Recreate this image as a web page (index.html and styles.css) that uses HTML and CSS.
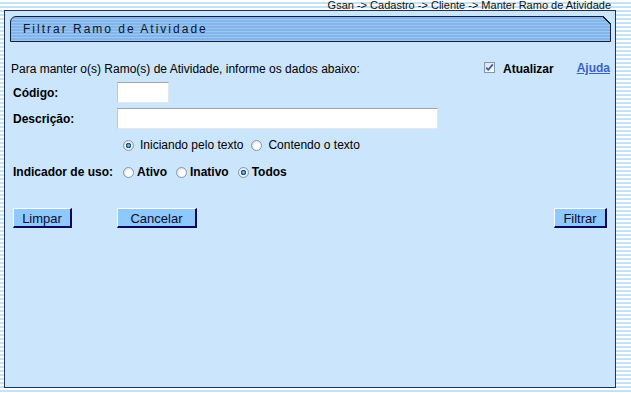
FILE: index.html
```html
<!DOCTYPE html>
<html lang="pt">
<head>
<meta charset="utf-8">
<title>Filtrar Ramo de Atividade</title>
<link rel="stylesheet" href="styles.css">
</head>
<body>
<div class="crumb">Gsan -&gt; Cadastro -&gt; Cliente -&gt; Manter Ramo de Atividade</div>
<div class="panel">
  <div class="titlebar">Filtrar Ramo de Atividade</div>
  <form class="content">
    <div class="intro-row">
      <span class="intro">Para manter o(s) Ramo(s) de Atividade, informe os dados abaixo:</span>
      <label class="atualizar">
        <span class="chk"><svg width="9" height="9" viewBox="0 0 9 9"><path d="M1.2 4.6 L3.3 6.8 L7.8 1.4" fill="none" stroke="#3a55a8" stroke-width="1.7"/></svg></span>
        Atualizar
      </label>
      <a class="ajuda" href="#">Ajuda</a>
    </div>
    <div class="field-row">
      <span class="lbl">Código:</span>
      <input class="txt w-code" type="text">
    </div>
    <div class="field-row row-desc">
      <span class="lbl">Descrição:</span>
      <input class="txt w-desc" type="text">
    </div>
    <div class="radio-row">
      <input class="radio" type="radio" name="tipo" checked><span class="opt">Iniciando pelo texto</span>
      <input class="radio" type="radio" name="tipo"><span class="opt">Contendo o texto</span>
    </div>
    <div class="uso-row">
      <span class="lbl lbl-uso">Indicador de uso:</span>
      <input class="radio" type="radio" name="uso"><span class="opt-b">Ativo</span>
      <input class="radio" type="radio" name="uso"><span class="opt-b">Inativo</span>
      <input class="radio" type="radio" name="uso" checked><span class="opt-b">Todos</span>
    </div>
    <div class="btn-row">
      <button type="button" class="btn b-limpar">Limpar</button>
      <button type="button" class="btn b-cancelar">Cancelar</button>
      <button type="button" class="btn b-filtrar">Filtrar</button>
    </div>
  </form>
</div>
</body>
</html>
```
FILE: styles.css
```css
html, body {
  margin: 0;
  padding: 0;
}
body {
  width: 631px;
  height: 393px;
  overflow: hidden;
  font-family: "Liberation Sans", Arial, sans-serif;
  color: #000;
  background: repeating-linear-gradient(to bottom, #ffffff 0 2px, #c4e2f6 2px 4px);
}
.crumb {
  height: 10px;
  font-size: 11px;
  line-height: 10px;
  text-align: right;
  padding-right: 20px;
  color: #111;
  white-space: nowrap;
}
.panel {
  margin-left: 4px;
  width: 612px;
  height: 378px;
  box-sizing: border-box;
  border: 1px solid #1e3452;
  background: #cbe5fd;
  padding: 5px 4px 0 5px;
}
.titlebar {
  position: relative;
  height: 26px;
  box-sizing: border-box;
  border: 1px solid #142038;
  border-top-left-radius: 6px;
  background: repeating-linear-gradient(to bottom, #82b5eb 0 2px, #9dc7f1 2px 3px);
  padding-left: 12px;
  font-size: 12px;
  line-height: 24px;
  letter-spacing: 2px;
  color: #0a1530;
}
.titlebar::after {
  content: "";
  position: absolute;
  top: -1px;
  right: -1px;
  width: 8px;
  height: 8px;
  background: linear-gradient(to bottom left, #cbe5fd 0 46%, #142038 46% 60%, transparent 60%);
}
.content {
  margin: 20px 0 0 0;
  padding: 0 1px 0 1px;
}
.intro-row {
  display: flex;
  align-items: flex-start;
  height: 14px;
  font-size: 12px;
  line-height: 14px;
}
.intro {
  flex: 1;
}
.atualizar {
  display: flex;
  align-items: flex-start;
  font-weight: bold;
  margin-right: 23px;
}
.chk {
  width: 11px;
  height: 11px;
  box-sizing: border-box;
  border: 1px solid #8796a6;
  background: linear-gradient(135deg, #dfe3e8, #fbfcfd);
  margin-right: 8px;
  display: flex;
  align-items: center;
  justify-content: center;
}
.ajuda {
  font-weight: bold;
  color: #3a62c6;
  text-decoration: underline;
  margin-top: -1px;
}
.field-row {
  display: flex;
  align-items: center;
  height: 21px;
  margin-top: 6px;
  font-size: 12px;
  line-height: 14px;
}
.row-desc {
  margin-top: 5px;
}
.lbl {
  font-weight: bold;
  width: 104px;
  padding-left: 2px;
}
.txt {
  box-sizing: border-box;
  height: 21px;
  margin: 0;
  padding: 0 2px;
  border: 1px solid #e4e8ec;
  border-top-color: #a4a4a4;
  border-left-color: #c4c8cc;
  background: #fff;
  font-family: "Liberation Sans", Arial, sans-serif;
  font-size: 12px;
}
.w-code {
  width: 52px;
}
.w-desc {
  width: 321px;
}
.radio-row {
  display: flex;
  align-items: center;
  height: 14px;
  margin-top: 9px;
  padding-left: 112px;
  font-size: 12px;
  line-height: 14px;
}
.radio {
  -webkit-appearance: none;
  appearance: none;
  margin: 0;
  width: 11px;
  height: 11px;
  box-sizing: border-box;
  border-radius: 50%;
  border: 1px solid #8a98a6;
  background: radial-gradient(circle at 62% 62%, #ffffff 0 30%, #d8dde3 85%);
  flex: none;
}
.radio:checked {
  background: radial-gradient(circle at 50% 50%, #86ccef 0 10%, #2a78ae 24%, #0f3d66 40%, #eef1f4 46%, #d8dde3 90%);
}
.radio-row .radio {
  margin-right: 6px;
}
.radio-row .opt {
  margin-right: 8px;
}
.uso-row {
  display: flex;
  align-items: center;
  height: 14px;
  margin-top: 13px;
  font-size: 12px;
  line-height: 14px;
}
.lbl-uso {
  width: 110px;
}
.uso-row .radio {
  margin-right: 3px;
}
.opt-b {
  font-weight: bold;
  margin-right: 9px;
}
.btn-row {
  display: flex;
  margin-top: 29px;
  height: 20px;
}
.btn {
  box-sizing: border-box;
  height: 20px;
  margin: 0;
  padding: 2px 0 0;
  border-style: solid;
  border-width: 1px 2px 2px 1px;
  border-color: #ffffff #0a0a5c #0a0a5c #ffffff;
  background: #8fc8fa;
  color: #0a0a30;
  font-family: "Liberation Sans", Arial, sans-serif;
  font-size: 13px;
  line-height: 15px;
  text-align: center;
}
.b-limpar {
  width: 59px;
  margin-left: 2px;
}
.b-cancelar {
  width: 80px;
  margin-left: 45px;
}
.b-filtrar {
  width: 53px;
  margin-left: auto;
  margin-right: 3px;
}
```
